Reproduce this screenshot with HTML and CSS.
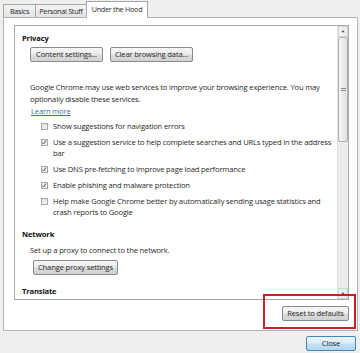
FILE: index.html
```html
<!DOCTYPE html>
<html>
<head>
<meta charset="utf-8">
<link rel="stylesheet" href="styles.css">
</head>
<body>
<div class="dialog">
  <div class="tabs">
    <div class="tab">Basics</div>
    <div class="tab">Personal Stuff</div>
    <div class="tab active">Under the Hood</div>
  </div>
  <div class="panel">
    <div class="scrollbox">
      <div class="content">
        <div class="heading">Privacy</div>
        <div class="section">
          <div class="btnrow">
            <button class="btn w-content">Content settings...</button>
            <button class="btn w-clear">Clear browsing data...</button>
          </div>
          <p class="para">Google Chrome may use web services to improve your browsing experience. You may optionally disable these services.</p>
          <a class="link">Learn more</a>
          <ul class="checks">
            <li><span class="cb"></span><span class="lbl">Show suggestions for navigation errors</span></li>
            <li><span class="cb on"><svg viewBox="0 0 8 8"><path d="M1.5 4.2 L3.3 6 L6.6 1.6"/></svg></span><span class="lbl">Use a suggestion service to help complete searches and URLs typed in the address bar</span></li>
            <li><span class="cb on"><svg viewBox="0 0 8 8"><path d="M1.5 4.2 L3.3 6 L6.6 1.6"/></svg></span><span class="lbl">Use DNS pre-fetching to improve page load performance</span></li>
            <li><span class="cb on"><svg viewBox="0 0 8 8"><path d="M1.5 4.2 L3.3 6 L6.6 1.6"/></svg></span><span class="lbl">Enable phishing and malware protection</span></li>
            <li><span class="cb"></span><span class="lbl">Help make Google Chrome better by automatically sending usage statistics and crash reports to Google</span></li>
          </ul>
        </div>
        <div class="heading net">Network</div>
        <div class="section">
          <p class="para proxy">Set up a proxy to connect to the network.</p>
          <button class="btn w-proxy">Change proxy settings</button>
        </div>
        <div class="heading trans">Translate</div>
      </div>
      <div class="scrollbar">
        <div class="sb-arrow"><svg viewBox="0 0 10 10"><path d="M3 6 L5 3.5 L7 6 Z"/></svg></div>
        <div class="sb-thumb"><span class="grip"></span></div>
        <div class="sb-track"></div>
        <div class="sb-arrow"><svg viewBox="0 0 10 10"><path d="M3 4 L5 6.5 L7 4 Z"/></svg></div>
      </div>
    </div>
    <div class="panel-foot">
      <button class="btn w-reset">Reset to defaults</button>
      <div class="highlight"></div>
    </div>
  </div>
  <div class="foot">
    <button class="btn close">Close</button>
  </div>
</div>
</body>
</html>
```

FILE: styles.css
```css
* { box-sizing: border-box; }
html, body { margin: 0; padding: 0; }
body {
  background: #efefef;
  width: 360px;
  height: 353px;
  overflow: hidden;
  font-family: "Open Sans", "Noto Sans", sans-serif;
  font-size: 7.6px;
  letter-spacing: -0.16px;
  color: #1f1f1f;
}
.dialog { padding: 1px 3px 0 3px; width: 360px; }
.tabs { display: flex; height: 16px; align-items: flex-end; position: relative; z-index: 2; }
.tab {
  height: 13px;
  line-height: 12px;
  padding: 0;
  text-align: center;
  font-size: 7.2px;
  letter-spacing: -0.25px;
  border: 1px solid #a6a6a6;
  border-bottom: none;
  background: linear-gradient(#f4f4f4, #e3e3e3);
  margin-right: -1px;
  white-space: nowrap;
  overflow: hidden;
}
.tab:first-child { width: 33px; }
.tab:nth-child(2) { width: 52px; }
.tab.active {
  width: 62px;
  height: 17px;
  line-height: 14px;
  background: #fff;
  margin-bottom: -1px;
}
.panel {
  border: 1px solid #b4b4b4;
  background: #fff;
  width: 355px;
  height: 314px;
  padding: 7px 8px 0 10px;
}
.scrollbox {
  display: flex;
  border: 1px solid #a8a8a8;
  height: 275px;
  width: 335px;
}
.content {
  flex: 1;
  overflow: hidden;
  padding: 6px 0 0 7px;
}
.heading { font-weight: bold; line-height: 12px; height: 12px; color: #111; }
.heading.net { margin-top: 10px; }
.heading.trans { margin-top: 10px; }
.section { padding-left: 8px; }
.btnrow { display: flex; gap: 7px; margin-top: 3px; }
.btn {
  font-family: inherit;
  font-size: 7.6px;
  letter-spacing: inherit;
  color: #1f1f1f;
  height: 15px;
  padding: 0;
  border: 1px solid #8a8a8a;
  border-radius: 2px;
  background: linear-gradient(#f6f6f6 0%, #ececec 48%, #dcdcdc 52%, #d2d2d2 100%);
  line-height: 13px;
  text-align: center;
  display: block;
}
.w-content { width: 73px; }
.w-clear { width: 83px; }
.w-proxy { width: 85px; margin-left: 3px; margin-top: 4px; }
.w-reset { width: 67px; }
.para { margin: 19px 0 0 0; line-height: 12px; }
.para.proxy { margin-top: 4px; }
.link { display: block; color: #3f6fa8; text-decoration: underline; line-height: 12px; margin-left: 1px; }
.checks { list-style: none; margin: 4px 0 0 0; padding: 0 0 0 11px; }
.checks li { display: flex; line-height: 11px; margin-bottom: 5px; }
.checks li:last-child { margin-bottom: 0; }
.lbl { width: 281px; }
.cb {
  flex: none;
  width: 7px;
  height: 7px;
  margin: 2px 5px 0 0;
  border: 1px solid #a9a9a9;
  background: linear-gradient(#e4e4e4, #f2f2f2);
  display: flex;
}
.cb svg { width: 7px; height: 7px; margin: -1px 0 0 -1px; }
.cb path { fill: none; stroke: #555; stroke-width: 1.3; }
.scrollbar {
  width: 11px;
  display: flex;
  flex-direction: column;
  background: #ececec;
  border-left: 1px solid #e2e2e2;
}
.sb-arrow { height: 11px; display: flex; background: linear-gradient(90deg, #f5f5f5, #e8e8e8); border: 1px solid #d4d4d4; }
.sb-arrow svg { width: 9px; height: 9px; }
.sb-arrow path { fill: #4d4d4d; }
.sb-thumb {
  height: 105px;
  background: linear-gradient(90deg, #f5f5f5, #e2e2e2);
  border: 1px solid #b0b0b0;
  border-radius: 2px;
  display: flex;
  align-items: center;
  justify-content: center;
}
.grip { width: 5px; height: 3px; border-top: 1px solid #8a8a8a; border-bottom: 1px solid #8a8a8a; }
.sb-track { flex: 1; }
.panel-foot {
  position: relative;
  display: flex;
  justify-content: flex-end;
  padding-top: 6px;
}
.highlight {
  position: absolute;
  left: 249px;
  top: -6px;
  width: 93px;
  height: 35px;
  border: 2px solid #c8202b;
}
.foot { display: flex; justify-content: flex-end; padding-top: 5px; }
.btn.close {
  width: 50px;
  height: 15px;
  margin-right: 1px;
  border-color: #3f86bf;
  background: linear-gradient(#eaf5fc 0%, #dcecf8 48%, #c4e0f4 52%, #b4d6ef 100%);
}
```
